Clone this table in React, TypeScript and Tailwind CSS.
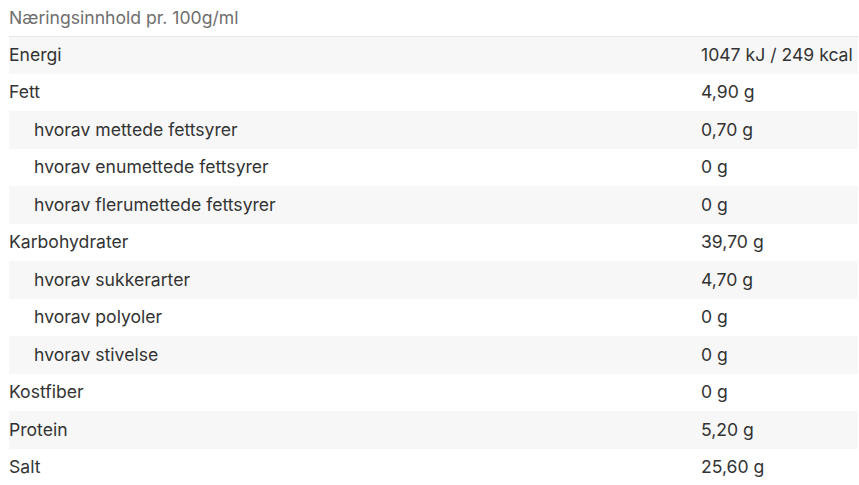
const rows: { label: string; value: string; sub?: boolean }[] = [
  { label: "Energi", value: "1047 kJ / 249 kcal" },
  { label: "Fett", value: "4,90 g" },
  { label: "hvorav mettede fettsyrer", value: "0,70 g", sub: true },
  { label: "hvorav enumettede fettsyrer", value: "0 g", sub: true },
  { label: "hvorav flerumettede fettsyrer", value: "0 g", sub: true },
  { label: "Karbohydrater", value: "39,70 g" },
  { label: "hvorav sukkerarter", value: "4,70 g", sub: true },
  { label: "hvorav polyoler", value: "0 g", sub: true },
  { label: "hvorav stivelse", value: "0 g", sub: true },
  { label: "Kostfiber", value: "0 g" },
  { label: "Protein", value: "5,20 g" },
  { label: "Salt", value: "25,60 g" },
];

export default function App() {
  return (
    <div className="bg-white pl-[9px] pr-px font-['Inter',sans-serif] text-[17.6px] text-[#333]">
      <table className="w-full border-collapse">
        <thead>
          <tr className="h-[36px] border-b border-[#e5e5e5]">
            <th colSpan={2} className="p-0 text-left font-normal text-[#6e6e6e]">
              Næringsinnhold pr. 100g/ml
            </th>
          </tr>
        </thead>
        <tbody>
          {rows.map((r, i) => (
            <tr key={r.label} className={`h-[37.5px] ${i % 2 === 0 ? "bg-[#f7f7f7]" : "bg-white"}`}>
              <td className={r.sub ? "pl-[25px]" : "p-0"}>{r.label}</td>
              <td className="w-[157px] p-0">{r.value}</td>
            </tr>
          ))}
        </tbody>
      </table>
    </div>
  );
}
